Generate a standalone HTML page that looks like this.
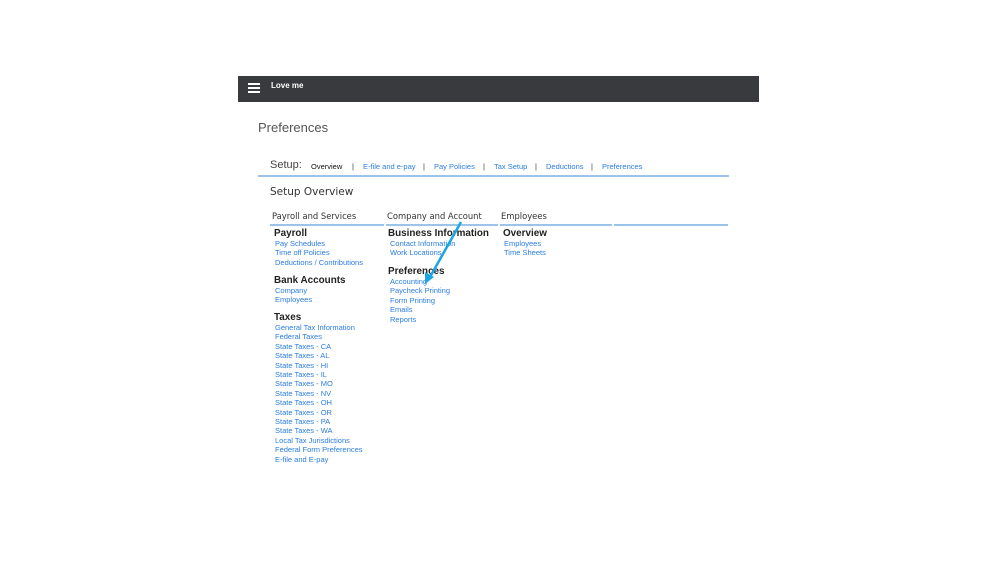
<!DOCTYPE html><html><head><style>
body{margin:0;width:999px;height:562px;background:#fff;position:relative;overflow:hidden;font-family:"Liberation Sans",Arial,sans-serif}
.a{position:absolute;white-space:nowrap}
.bar{left:238px;top:76px;width:521px;height:26px;background:#393a3d}
.l{color:#2a7de1;font-size:7.5px;line-height:9.4px}
.h{font-weight:bold;font-size:9.9px;color:#222;font-family:"Liberation Sans",sans-serif}
.c{font-size:8.4px;color:#333;font-family:"DejaVu Sans",sans-serif}
.ln{position:absolute;height:2px;background:#9cc4ea;top:224px}
.t{position:absolute;top:162px;font-size:7.5px;color:#2a7de1;white-space:nowrap}
.p{position:absolute;top:162px;font-size:7.5px;color:#333}
</style></head><body>
<div class="a bar"></div>
<div class="a" style="left:248px;top:83px;width:12px;height:2px;background:#fff;box-shadow:0 4px #fff,0 8px #fff"></div>
<div class="a" style="left:271px;top:81px;color:#fff;font-size:8px;font-weight:bold">Love me</div>
<div class="a" style="left:258px;top:120px;font-size:13px;color:#555">Preferences</div>
<div class="a" style="left:270px;top:159px;font-size:11px;color:#444">Setup:</div>
<div class="t" style="left:311px;color:#111">Overview</div><div class="p" style="left:352px">|</div>
<div class="t" style="left:363px">E-file and e-pay</div><div class="p" style="left:423px">|</div>
<div class="t" style="left:434px">Pay Policies</div><div class="p" style="left:483px">|</div>
<div class="t" style="left:494px">Tax Setup</div><div class="p" style="left:535px">|</div>
<div class="t" style="left:546px">Deductions</div><div class="p" style="left:591px">|</div>
<div class="t" style="left:602px">Preferences</div>
<div class="a" style="left:258px;top:175px;width:471px;height:2px;background:#9cc4ea"></div>
<div class="a" style="left:270px;top:186px;font-size:10.5px;color:#333;font-family:'DejaVu Sans',sans-serif">Setup Overview</div>
<div class="a c" style="left:272px;top:211px">Payroll and Services</div>
<div class="a c" style="left:387px;top:211px">Company and Account</div>
<div class="a c" style="left:501px;top:211px">Employees</div>
<div class="ln" style="left:270px;width:114px"></div>
<div class="ln" style="left:386px;width:112px"></div>
<div class="ln" style="left:500px;width:112px"></div>
<div class="ln" style="left:614px;width:114px"></div>
<div class="a h" style="left:274px;top:228px">Payroll</div>
<div class="a l" style="left:275px;top:239px">Pay Schedules<br>Time off Policies<br>Deductions / Contributions</div>
<div class="a h" style="left:274px;top:275px">Bank Accounts</div>
<div class="a l" style="left:275px;top:286px">Company<br>Employees</div>
<div class="a h" style="left:274px;top:312px">Taxes</div>
<div class="a l" style="left:275px;top:323px">General Tax Information<br>Federal Taxes<br>State Taxes - CA<br>State Taxes - AL<br>State Taxes - HI<br>State Taxes - IL<br>State Taxes - MO<br>State Taxes - NV<br>State Taxes - OH<br>State Taxes - OR<br>State Taxes - PA<br>State Taxes - WA<br>Local Tax Jurisdictions<br>Federal Form Preferences<br>E-file and E-pay</div>
<div class="a h" style="left:388px;top:228px">Business Information</div>
<div class="a l" style="left:390px;top:239px">Contact Information<br>Work Locations</div>
<div class="a h" style="left:388px;top:266px">Preferences</div>
<div class="a l" style="left:390px;top:277px">Accounting<br>Paycheck Printing<br>Form Printing<br>Emails<br>Reports</div>
<div class="a h" style="left:503px;top:228px">Overview</div>
<div class="a l" style="left:504px;top:239px">Employees<br>Time Sheets</div>
<svg class="a" style="left:0;top:0" width="999" height="562"><line x1="461" y1="222" x2="430" y2="277" stroke="#1ba5e3" stroke-width="2.5"/><polygon points="425,284 425,272 434,277" fill="#1ba5e3"/></svg>
</body></html>
